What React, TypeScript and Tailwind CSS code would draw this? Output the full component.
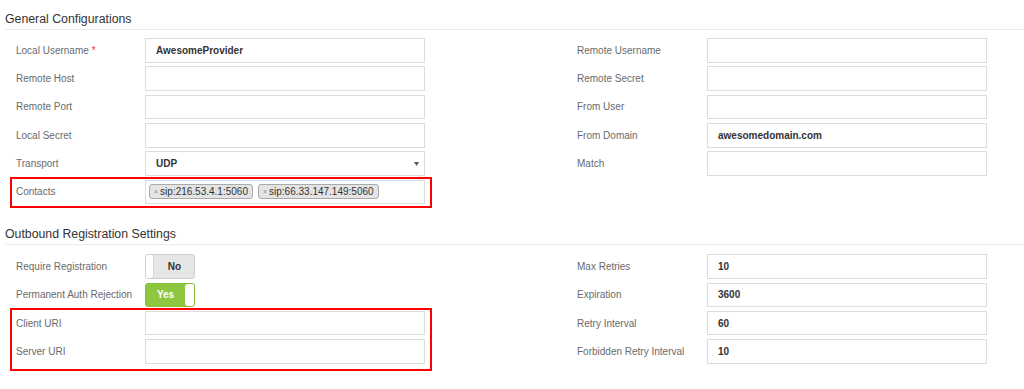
import React from "react";

const labelCls = "shrink-0 text-[10px] text-[#6a6a6a]";
const boxCls =
  "flex h-[24.5px] w-[280px] items-center border border-[#dcdcdc] bg-white px-[10px] text-[10px] font-bold text-[#333]";

function Title({ children }: { children: React.ReactNode }) {
  return (
    <div className="ml-[5px] border-b border-[#ececec] pb-[3px] pt-[13px] text-[12.3px] leading-[13px] text-[#333]">
      {children}
    </div>
  );
}

function Field({
  label,
  value,
  required,
  wide,
}: {
  label: string;
  value?: string;
  required?: boolean;
  wide?: boolean;
}) {
  return (
    <div className="flex h-[24.5px] items-center">
      <div className={`${labelCls} ${wide ? "w-[130px]" : "w-[129px]"}`}>
        {label}
        {required && <span className="ml-[3px] text-[#ff2a2a]">*</span>}
      </div>
      <div className={boxCls}>{value}</div>
    </div>
  );
}

function Tag({ text }: { text: string }) {
  return (
    <span className="flex h-[15px] items-center gap-[2px] rounded-[3px] border border-[#aaa] bg-[#e4e4e4] px-[4px] text-[10px] text-[#333]">
      <span className="text-[7px] leading-none text-[#888]">×</span>
      {text}
    </span>
  );
}

function Toggle({ on, label }: { on: boolean; label: string }) {
  return (
    <div className="flex h-[24.5px] items-center">
      <div className={`${labelCls} w-[129px]`}>{label}</div>
      {on ? (
        <div className="flex h-[24.5px] w-[50px] overflow-hidden rounded-[3px] border border-[#86bf3a] bg-[#8dc63f]">
          <div className="flex flex-1 items-center justify-center text-[10px] font-bold text-white">Yes</div>
          <div className="w-[9px] rounded-l-[3px] bg-white" />
        </div>
      ) : (
        <div className="flex h-[24.5px] w-[50px] overflow-hidden rounded-[3px] border border-[#d0d0d0] bg-[#e6e6e6]">
          <div className="w-[8px] rounded-r-[3px] border-r border-[#d6d6d6] bg-white" />
          <div className="flex flex-1 items-center justify-center pl-[1px] text-[10px] font-bold text-[#333]">No</div>
        </div>
      )}
    </div>
  );
}

export default function App() {
  return (
    <div className="h-[389px] w-[1024px] overflow-hidden bg-white font-['Liberation_Sans',Arial,sans-serif]">
      <Title>General Configurations</Title>
      <div className="mt-[8px] grid grid-cols-[561px_1fr] pl-[16px]">
        <div className="flex w-[409px] flex-col gap-[3.85px]">
          <Field label="Local Username" value="AwesomeProvider" required />
          <Field label="Remote Host" />
          <Field label="Remote Port" />
          <Field label="Local Secret" />
          <div className="flex h-[24.5px] items-center">
            <div className={`${labelCls} w-[129px]`}>Transport</div>
            <div className={`${boxCls} justify-between pr-[5px]`}>
              UDP
              <svg width="5" height="4" viewBox="0 0 5 4">
                <path d="M0 0h5L2.5 4z" fill="#555" />
              </svg>
            </div>
          </div>
          <div className="relative flex h-[24.5px] items-center">
            <div className={`${labelCls} w-[129px]`}>Contacts</div>
            <div className="flex h-[24.5px] w-[280px] items-center gap-[5px] border border-[#dcdcdc] bg-white px-[3px]">
              <Tag text="sip:216.53.4.1:5060" />
              <Tag text="sip:66.33.147.149:5060" />
            </div>
            <div className="pointer-events-none absolute -bottom-[4px] -left-[6px] -right-[7px] -top-[3px] border-2 border-[#ff0000]" />
          </div>
        </div>
        <div className="flex flex-col gap-[3.85px]">
          <Field label="Remote Username" wide />
          <Field label="Remote Secret" wide />
          <Field label="From User" wide />
          <Field label="From Domain" value="awesomedomain.com" wide />
          <Field label="Match" wide />
        </div>
      </div>

      <div className="mt-[11px]">
        <Title>Outbound Registration Settings</Title>
      </div>
      <div className="mt-[9px] grid grid-cols-[561px_1fr] pl-[16px]">
        <div className="flex w-[409px] flex-col gap-[3.85px]">
          <Toggle on={false} label="Require Registration" />
          <Toggle on label="Permanent Auth Rejection" />
          <div className="relative flex flex-col gap-[3.85px]">
            <Field label="Client URI" />
            <Field label="Server URI" />
            <div className="pointer-events-none absolute -bottom-[7px] -left-[6px] -right-[7px] -top-[3px] border-2 border-[#ff0000]" />
          </div>
        </div>
        <div className="flex flex-col gap-[3.85px]">
          <Field label="Max Retries" value="10" wide />
          <Field label="Expiration" value="3600" wide />
          <Field label="Retry Interval" value="60" wide />
          <Field label="Forbidden Retry Interval" value="10" wide />
        </div>
      </div>
    </div>
  );
}
